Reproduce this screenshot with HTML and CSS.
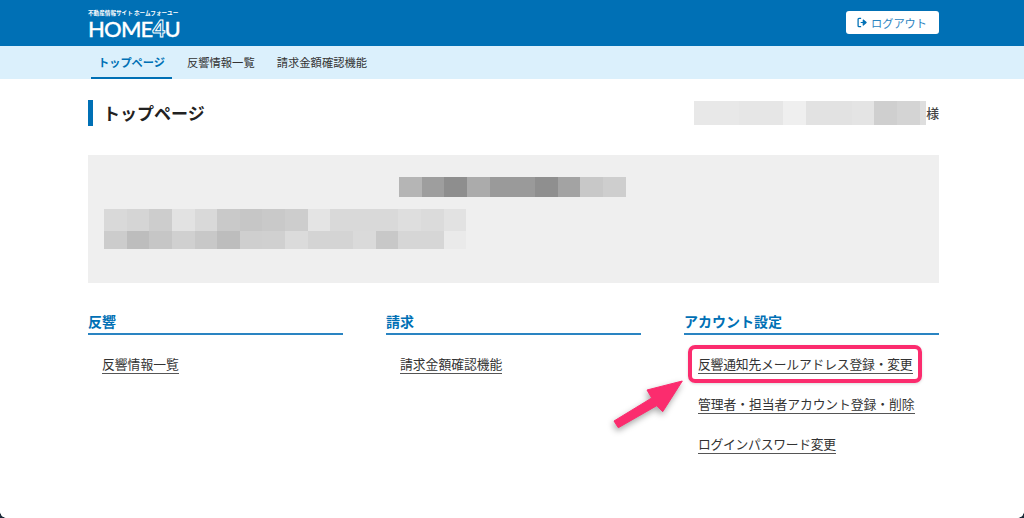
FILE: index.html
```html
<!DOCTYPE html>
<html lang="ja">
<head>
<meta charset="utf-8">
<title>HOME4U</title>
<link rel="stylesheet" href="styles.css">
</head>
<body>
<div class="page">
  <header class="topbar">
    <a class="logo" href="#">
      <span class="logo-sub">不動産情報サイト ホームフォーユー</span>
      <span class="logo-main">HOME<span class="logo-four">4</span>U</span>
    </a>
    <a class="logout" href="#">
      <svg class="logout-icon" viewBox="0 0 12 12" width="11" height="11" aria-hidden="true">
        <path d="M4.5 1.5H2.2a1 1 0 0 0-1 1v7a1 1 0 0 0 1 1h2.3" fill="none" stroke="#0070b5" stroke-width="1.4"/>
        <path d="M4 6h4.2M6.8 3.2l3.2 2.8-3.2 2.8z" fill="#0070b5" stroke="#0070b5" stroke-width="1.2" stroke-linejoin="round"/>
      </svg>
      ログアウト
    </a>
  </header>
  <nav class="tabs">
    <a class="tab tab-active" href="#">トップページ</a>
    <a class="tab" href="#">反響情報一覧</a>
    <a class="tab" href="#">請求金額確認機能</a>
  </nav>
  <main class="content">
    <div class="title-row">
      <h1 class="page-title">トップページ</h1>
      <div class="user"><span class="mosaic mosaic-name"></span><span class="user-suffix">様</span></div>
    </div>
    <section class="notice">
      <div class="mosaic mosaic-head"></div>
      <div class="mosaic mosaic-line1"></div>
      <div class="mosaic mosaic-line2"></div>
    </section>
    <div class="columns">
      <section class="col">
        <h2 class="col-title">反響</h2>
        <ul class="links">
          <li><a href="#">反響情報一覧</a></li>
        </ul>
      </section>
      <section class="col">
        <h2 class="col-title">請求</h2>
        <ul class="links">
          <li><a href="#">請求金額確認機能</a></li>
        </ul>
      </section>
      <section class="col">
        <h2 class="col-title">アカウント設定</h2>
        <ul class="links">
          <li><a class="tight-a" href="#">反響通知先メールアドレス登録・変更</a></li>
          <li><a class="tight-b" href="#">管理者・担当者アカウント登録・削除</a></li>
          <li><a class="tight-c" href="#">ログインパスワード変更</a></li>
        </ul>
      </section>
    </div>
  </main>
  <span class="highlight"></span>
  <svg class="arrow" viewBox="0 0 90 70" width="90" height="70" aria-hidden="true">
    <path d="M73.3 7 38 16 42.7 24 5 47 9.3 53.7 47.7 31.7 53.7 37.7Z" fill="#fb2c6e" stroke="#fb2c6e" stroke-width="1" stroke-linejoin="round"/>
  </svg>
  <span class="corner corner-left"></span>
  <span class="corner corner-right"></span>
</div>
</body>
</html>
```
FILE: styles.css
```css
* { box-sizing: border-box; }
html, body { margin: 0; padding: 0; }
body {
  background: #fff;
  color: #333;
  font-family: "Noto Sans CJK JP", "Noto Sans", sans-serif;
  font-size: 12.8px;
}
a { color: inherit; text-decoration: none; }
.page { position: relative; width: 1024px; height: 518px; overflow: hidden; }

.topbar {
  height: 46px;
  background: #0070b5;
  padding: 0 85px 0 88px;
  display: flex;
  align-items: center;
  justify-content: space-between;
}
.logo { display: flex; flex-direction: column; color: #fff; width: 92px; }
.logo-sub { font-size: 5.6px; font-weight: 700; line-height: 7px; white-space: nowrap; margin-top: 2px; margin-bottom: 2px; }
.logo-main {
  font-family: "Lato", sans-serif;
  font-size: 22px;
  font-weight: 500;
  line-height: 20px;
  letter-spacing: -0.8px;
  white-space: nowrap;
  -webkit-text-stroke: 0.3px #fff;
}
.logo-four { color: transparent; -webkit-text-stroke: 1px #fff; font-weight: 700; }
.logout {
  width: 93px;
  height: 23px;
  margin-top: -1px;
  padding-left: 11px;
  background: #fff;
  border-radius: 3px;
  color: #2b84bf;
  font-size: 11.2px;
  display: flex;
  align-items: center;
  gap: 3px;
}

.tabs {
  height: 33px;
  background: #dbf0fc;
  padding: 0 0 0 91px;
  display: flex;
}
.tab {
  height: 33px;
  padding: 0 7px;
  margin-right: 8px;
  font-size: 11.3px;
  line-height: 32px;
  color: #333;
}
.tab-active { color: #0070b5; font-size: 11.2px; font-weight: 700; border-bottom: 2px solid #0070b5; }

.content { padding: 21px 85px 0 88px; }
.title-row { display: flex; justify-content: space-between; align-items: center; height: 26px; }
.page-title {
  margin: 0;
  padding-left: 10px;
  border-left: 5px solid #0070b5;
  font-size: 17px;
  font-weight: 700;
  line-height: 26px;
  color: #222;
}
.user { display: flex; align-items: center; }
.user-suffix { font-size: 12.8px; font-weight: 500; color: #444; line-height: 20px; padding-bottom: 1px; }

.mosaic { display: block; }
.mosaic-name {
  width: 232px;
  height: 24px;
  background: linear-gradient(90deg,
    #e8e8e8 0 45px, #e6e6e6 45px 89px, #efefef 89px 112px, #e2e2e2 112px 158px,
    #e4e4e4 158px 180px, #cfcfcf 180px 203px, #d4d4d4 203px 226px, #dedede 226px 232px);
}
.notice {
  margin-top: 29px;
  height: 128px;
  background: #efefef;
  padding: 22px 16px 0;
  display: flex;
  flex-direction: column;
}
.mosaic-head {
  align-self: center;
  margin-right: 2px;
  width: 227px;
  height: 20px;
  margin-bottom: 12px;
  background: linear-gradient(90deg,
    #b5b5b5 0 23px, #9e9e9e 23px 45px, #8e8e8e 45px 68px, #ababab 68px 91px,
    #9a9a9a 91px 136px, #8f8f8f 136px 159px, #a3a3a3 159px 181px, #c8c8c8 181px 204px, #cecece 204px 227px);
}
.mosaic-line1 {
  width: 362px;
  height: 22px;
  background: linear-gradient(90deg,
    #d9d9d9 0 23px, #d5d5d5 23px 45px, #cdcdcd 45px 68px, #e2e2e2 68px 91px,
    #d9d9d9 91px 113px, #c9c9c9 113px 136px, #c6c6c6 136px 158px, #c9c9c9 158px 181px,
    #cdcdcd 181px 204px, #e4e4e4 204px 226px, #d9d9d9 226px 294px, #dedede 294px 317px,
    #dbdbdb 317px 340px, #e2e2e2 340px 362px);
}
.mosaic-line2 {
  width: 362px;
  height: 18px;
  background: linear-gradient(90deg,
    #cccccc 0 23px, #bdbdbd 23px 45px, #c6c6c6 45px 68px, #d0d0d0 68px 91px,
    #c8c8c8 91px 113px, #bdbdbd 113px 136px, #cfcfcf 136px 158px, #d0d0d0 158px 181px,
    #dbdbdb 181px 204px, #d4d4d4 204px 249px, #dadada 249px 272px, #c8c8c8 272px 294px,
    #d6d6d6 294px 340px, #eaeaea 340px 362px);
}

.columns {
  margin-top: 29px;
  display: grid;
  grid-template-columns: repeat(3, 255px);
  column-gap: 43px;
}
.col-title {
  margin: 0;
  height: 23px;
  border-bottom: 2px solid #2a84c2;
  color: #0070b5;
  font-size: 14px;
  font-weight: 700;
  line-height: 18px;
}
.links { list-style: none; margin: 0; padding: 19px 0 0 14px; }
.links li { height: 40px; line-height: 20px; }
.links a {
  display: inline-block;
  line-height: 19px;
  border-bottom: 1px solid #555;
  color: #333;
  white-space: nowrap;
}
.links .tight-a { letter-spacing: -0.18px; }
.links .tight-b { letter-spacing: -0.06px; }
.links .tight-c { letter-spacing: -0.27px; }

.highlight {
  position: absolute;
  left: 688px;
  top: 345px;
  width: 234px;
  height: 38px;
  border: 4px solid #fb2c6e;
  border-radius: 7px;
  box-shadow: 0 1px 3px rgba(0,0,0,.15);
}
.arrow {
  position: absolute;
  left: 609px;
  top: 374px;
  filter: drop-shadow(-1px 3px 3px rgba(0,0,0,.35));
}
.corner { position: absolute; bottom: 0; width: 6px; height: 6px; }
.corner-left { left: 0; background: radial-gradient(circle at 100% 0, transparent 5.5px, #1c2b3a 6px); }
.corner-right { right: 0; background: radial-gradient(circle at 0 0, transparent 5.5px, #1c2b3a 6px); }
```
